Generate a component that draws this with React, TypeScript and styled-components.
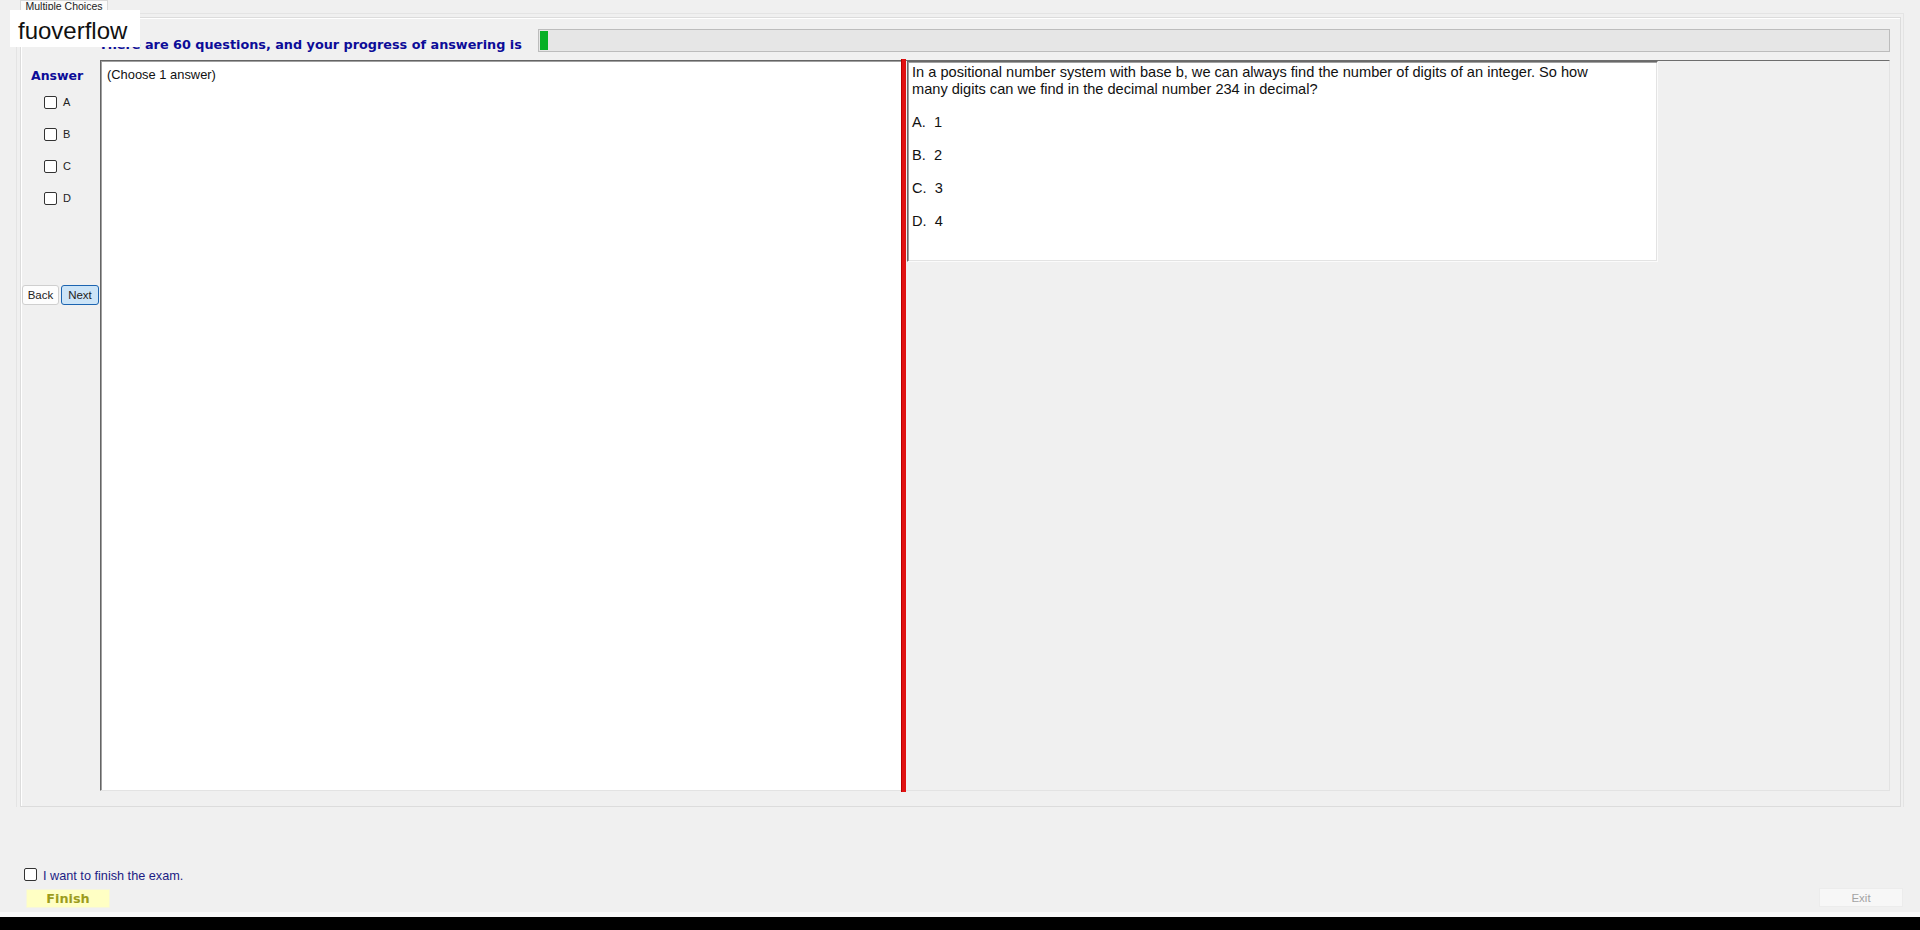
import React from 'react';
import styled, { createGlobalStyle } from 'styled-components';

const GlobalStyle = createGlobalStyle`
  html, body {
    margin: 0;
    padding: 0;
    background: #f0f0f0;
  }
`;

const Window = styled.div`
  position: relative;
  width: 1920px;
  height: 930px;
  display: flex;
  flex-direction: column;
  background: #f0f0f0;
  font-family: "Liberation Sans", Arial, sans-serif;
  overflow: hidden;
`;

const Watermark = styled.div`
  position: absolute;
  top: 10px;
  left: 10px;
  width: 122px;
  height: 33px;
  padding: 4px 0 0 8px;
  background: #fff;
  color: #111;
  font-size: 24px;
  line-height: 33px;
`;

const TabStrip = styled.div`
  height: 13px;
  padding-left: 20px;
  display: flex;
`;

const Tab = styled.div`
  width: 88px;
  height: 13px;
  border: 1px solid #d9d9d9;
  border-bottom: none;
  background: #fbfbfb;
  font-size: 10.5px;
  line-height: 10px;
  color: #222;
  text-align: center;
  overflow: hidden;
  box-sizing: border-box;
`;

const TabPage = styled.div`
  margin: 0 16px 0 16px;
  height: 794px;
  box-sizing: border-box;
  border: 1px solid #e4e4e4;
  border-bottom: none;
  padding: 3px 2px 0 3px;
`;

const Group = styled.div`
  height: 100%;
  box-sizing: border-box;
  border: 1px solid #dcdcdc;
  box-shadow: inset 1px 1px 0 #fff;
  display: flex;
  flex-direction: column;
  padding: 11px 10px 15px 0;
`;

const HeaderRow = styled.div`
  height: 23px;
  display: flex;
  align-items: center;
  padding-left: 78px;
`;

const Heading = styled.div`
  width: 439px;
  flex-shrink: 0;
  font-family: "DejaVu Sans", Verdana, sans-serif;
  font-weight: bold;
  font-size: 12.8px;
  color: #0c0c98;
  padding-top: 8px;
`;

const Progress = styled.div`
  flex: 1;
  height: 23px;
  box-sizing: border-box;
  border: 1px solid #bcbcbc;
  background: #e6e6e6;
  padding: 1px;
`;

const ProgressFill = styled.div`
  height: 100%;
  background: #06b025;
`;

const ContentRow = styled.div`
  flex: 1;
  margin-top: 8px;
  display: flex;
`;

const AnswerCol = styled.div`
  width: 79px;
  flex-shrink: 0;
  display: flex;
  flex-direction: column;
  padding-top: 8px;
`;

const AnswerTitle = styled.div`
  padding-left: 10px;
  font-family: "DejaVu Sans", Verdana, sans-serif;
  font-weight: bold;
  font-size: 12.5px;
  line-height: 15px;
  color: #0c0c98;
`;

const Choices = styled.div`
  margin-top: 3px;
  display: flex;
  flex-direction: column;
`;

const ChoiceRow = styled.label`
  height: 32px;
  display: flex;
  align-items: center;
  padding-left: 23px;
  font-size: 11px;
  color: #222;
`;

const CheckBox = styled.input.attrs({ type: 'checkbox' })`
  appearance: none;
  margin: 0 6px 0 0;
  width: 13px;
  height: 13px;
  box-sizing: border-box;
  border: 1px solid #333;
  border-radius: 2px;
  background: #fff;
  flex-shrink: 0;
`;

const NavRow = styled.div`
  margin-top: 71px;
  padding-left: 1px;
  display: flex;
  gap: 2px;
`;

const NavButton = styled.button<{ $active?: boolean }>`
  width: ${(p) => (p.$active ? 38 : 37)}px;
  height: 20px;
  padding: 0;
  box-sizing: border-box;
  border: 1px solid ${(p) => (p.$active ? '#1c64b0' : '#cfcfcf')};
  border-radius: 3px;
  background: ${(p) => (p.$active ? '#cce4f7' : '#fdfdfd')};
  font-family: "Liberation Sans", Arial, sans-serif;
  font-size: 11.5px;
  color: #222;
`;

const LeftPanel = styled.div`
  width: 801px;
  flex-shrink: 0;
  box-sizing: border-box;
  background: #fff;
  border-top: 1px solid #646464;
  border-left: 1px solid #646464;
  border-bottom: 1px solid #e3e3e3;
  box-shadow: inset 1px 1px 0 #a0a0a0;
  padding: 6px 6px;
  font-size: 12.9px;
  line-height: 15px;
  color: #111;
`;

const Splitter = styled.div`
  width: 5px;
  flex-shrink: 0;
  margin: -1px 0;
  background: #e01212;
  border-left: 1px solid #b80000;
  box-sizing: border-box;
`;

const RightPanel = styled.div`
  flex: 1;
  box-sizing: border-box;
  border-top: 1px solid #6d6d6d;
  border-right: 1px solid #e3e3e3;
  border-bottom: 1px solid #e3e3e3;
  padding-left: 1px;
`;

const QuestionBox = styled.div`
  width: 751px;
  height: 201px;
  box-sizing: border-box;
  background: #fff;
  border: 1px solid;
  border-color: #696969 #fbfbfb #fbfbfb #696969;
  box-shadow: inset 1px 1px 0 #a0a0a0, inset -1px -1px 0 #e3e3e3;
  padding: 2px 4px;
  font-size: 14.6px;
  line-height: 16.5px;
  color: #111;
`;

const QuestionText = styled.div`
  max-width: 705px;
`;

const Option = styled.div`
  margin-top: 16.5px;
  white-space: pre;
`;

const Footer = styled.div`
  flex: 1;
  display: flex;
  align-items: flex-end;
  justify-content: space-between;
  padding: 0 17px 4px 24px;
`;

const FinishCol = styled.div`
  display: flex;
  flex-direction: column;
`;

const FinishCheck = styled.label`
  display: flex;
  align-items: center;
  height: 13px;
  margin-bottom: 8px;
  font-size: 12.7px;
  color: #1c1c84;
`;

const FinishLabel = styled.span`
  padding-top: 3px;
`;

const FinishButton = styled.button`
  margin-left: 2px;
  width: 84px;
  height: 19px;
  padding: 0;
  border: 1px solid #f6f6dc;
  background: #ffffc4;
  font-family: "DejaVu Sans", Verdana, sans-serif;
  font-weight: bold;
  font-size: 12.8px;
  color: #9c9c1c;
`;

const ExitButton = styled.button`
  width: 84px;
  height: 19px;
  margin-bottom: 1px;
  padding: 0;
  border: 1px solid #ececec;
  background: #f7f7f7;
  font-family: "Liberation Sans", Arial, sans-serif;
  font-size: 11.5px;
  color: #a3a3a3;
`;

const BottomStrip = styled.div`
  height: 5px;
  background: #f9f9f9;
`;

const BlackBar = styled.div`
  height: 13px;
  background: #000;
`;

const options = ['A.  1', 'B.  2', 'C.  3', 'D.  4'];
const letters = ['A', 'B', 'C', 'D'];

function App() {
  const total = 60;
  const answered = 0.6; // a sliver of progress, as in the exam client

  return (
    <Window>
      <GlobalStyle />
      <TabStrip>
        <Tab>Multiple Choices</Tab>
      </TabStrip>
      <TabPage>
        <Group>
          <HeaderRow>
            <Heading>There are {total} questions, and your progress of answering is</Heading>
            <Progress>
              <ProgressFill style={{ width: `${answered}%` }} />
            </Progress>
          </HeaderRow>
          <ContentRow>
            <AnswerCol>
              <AnswerTitle>Answer</AnswerTitle>
              <Choices>
                {letters.map((l) => (
                  <ChoiceRow key={l}>
                    <CheckBox />
                    {l}
                  </ChoiceRow>
                ))}
              </Choices>
              <NavRow>
                <NavButton>Back</NavButton>
                <NavButton $active>Next</NavButton>
              </NavRow>
            </AnswerCol>
            <LeftPanel>(Choose 1 answer)</LeftPanel>
            <Splitter />
            <RightPanel>
              <QuestionBox>
                <QuestionText>
                  In a positional number system with base b, we can always find the number of digits of an integer. So how many digits can we find in the decimal number 234 in decimal?
                </QuestionText>
                {options.map((o) => (
                  <Option key={o}>{o}</Option>
                ))}
              </QuestionBox>
            </RightPanel>
          </ContentRow>
        </Group>
      </TabPage>
      <Footer>
        <FinishCol>
          <FinishCheck>
            <CheckBox />
            <FinishLabel>I want to finish the exam.</FinishLabel>
          </FinishCheck>
          <FinishButton>Finish</FinishButton>
        </FinishCol>
        <ExitButton>Exit</ExitButton>
      </Footer>
      <BottomStrip />
      <BlackBar />
      <Watermark>fuoverflow</Watermark>
    </Window>
  );
}

export default App;
